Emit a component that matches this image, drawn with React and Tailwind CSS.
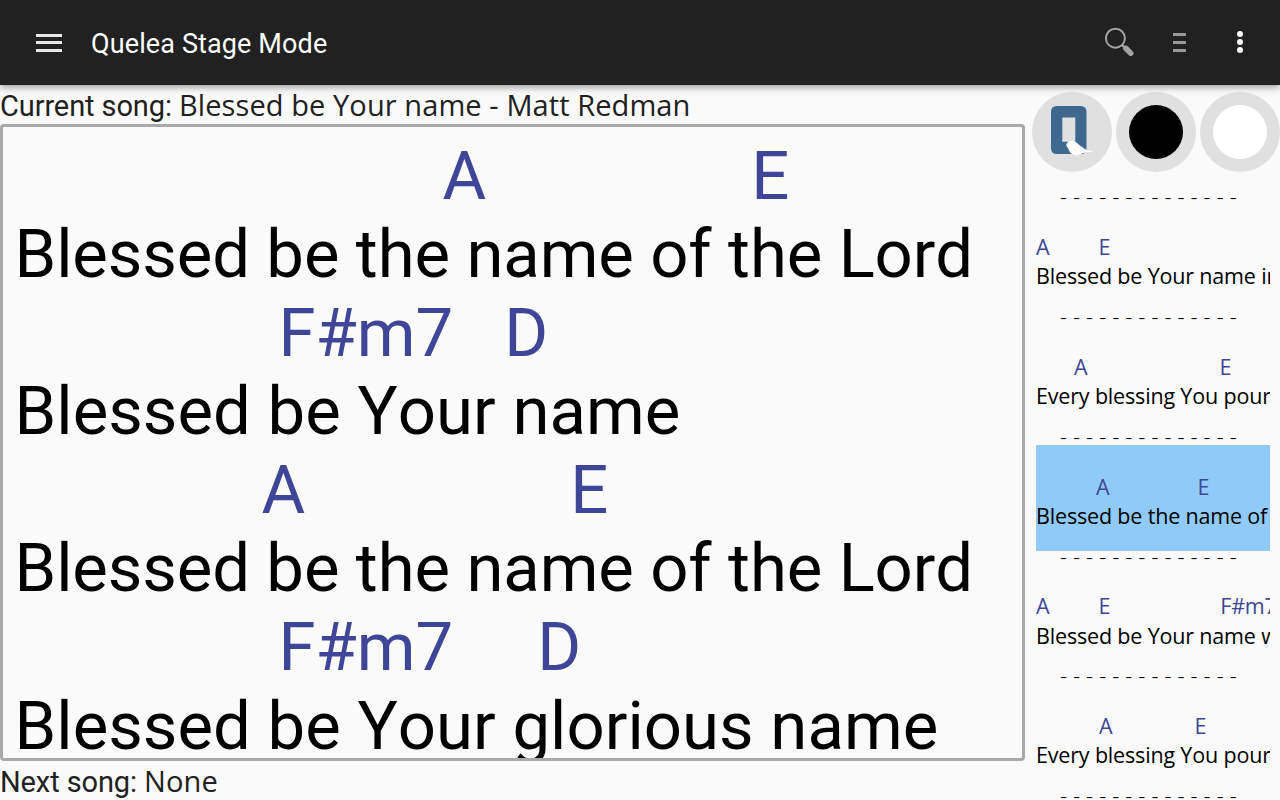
import React from 'react';

const lyrics = [
  {
    chords: [{ name: 'A', gap: 'ml-[428px]' }, { name: 'E', gap: 'ml-[265px]' }],
    text: 'Blessed be the name of the Lord',
    tracking: 'tracking-[-0.1px]',
  },
  {
    chords: [{ name: 'F#m7', gap: 'ml-[264px]' }, { name: 'D', gap: 'ml-[51px]' }],
    text: 'Blessed be Your name',
    tracking: 'tracking-[0.05px]',
  },
  {
    chords: [{ name: 'A', gap: 'ml-[247px]' }, { name: 'E', gap: 'ml-[265px]' }],
    text: 'Blessed be the name of the Lord',
    tracking: 'tracking-[-0.1px]',
  },
  {
    chords: [{ name: 'F#m7', gap: 'ml-[264px]' }, { name: 'D', gap: 'ml-[84px]' }],
    text: 'Blessed be Your glorious name',
    tracking: 'tracking-[0.05px]',
  },
];

const sections = [
  {
    chords: [{ name: 'A', gap: 'ml-0' }, { name: 'E', gap: 'ml-[49px]' }],
    text: 'Blessed be Your name in',
  },
  {
    chords: [{ name: 'A', gap: 'ml-[38px]' }, { name: 'E', gap: 'ml-[132px]' }],
    text: 'Every blessing You pour',
  },
  {
    chords: [{ name: 'A', gap: 'ml-[60px]' }, { name: 'E', gap: 'ml-[88px]' }],
    text: 'Blessed be the name of',
    active: true,
  },
  {
    chords: [
      { name: 'A', gap: 'ml-0' },
      { name: 'E', gap: 'ml-[49px]' },
      { name: 'F#m7', gap: 'ml-[110px]' },
    ],
    text: 'Blessed be Your name w',
  },
  {
    chords: [{ name: 'A', gap: 'ml-[63px]' }, { name: 'E', gap: 'ml-[82px]' }],
    text: 'Every blessing You pour',
  },
];

const Chords = ({ chords }) => (
  <div className="flex whitespace-pre text-[#3f4698]">
    {chords.map((chord, i) => (
      <span key={i} className={chord.gap}>{chord.name}</span>
    ))}
  </div>
);

const Divider = () => (
  <div className="relative h-[8px] leading-[8px] pl-[24px] text-[22px] font-light text-black tracking-[0.13px]">
    - - - - - - - - - - - - - -
  </div>
);

const SearchIcon = () => (
  <svg className="w-8 h-8" viewBox="0 0 32 32" fill="none">
    <circle cx="12.400" cy="11.200" r="9.500" stroke="#a3a3a3" strokeWidth="2" />
    <path d="M19 17.800l3 2.800" stroke="#a3a3a3" strokeWidth="2.500" />
    <path d="M22.800 21.300l4.900 4.900" stroke="#a3a3a3" strokeWidth="5.500" strokeLinecap="round" />
  </svg>
);

const LogoIcon = () => (
  <svg className="w-12 h-14" viewBox="0 0 48 56">
    <path
      fill="#3e688d"
      fillRule="evenodd"
      d="M9 2h23.500q6 0 6 6v36q0 6-6 6H9q-6 0-6-6V8q0-6 6-6zM14.300 13.500v24.300h13v-24.300z"
    />
    <path
      fill="#fff"
      d="M18.500 42c-.5-3 1.500-5 4.500-5 2-1 4.500.2 6 2 2.500 2.400 5.500 3.800 8.500 6.500 3 1.200 5.500 1.500 8 2-4 .8-8 .3-11 1.700-3 1.500-7.500 2.500-10 1-3.500-1.700-3.500-5-6-8.200z"
    />
    <path d="M29 51l1 2.500" stroke="#f4f4f4" strokeWidth="1" />
  </svg>
);

const RoundButton = ({ label, children }) => (
  <button
    aria-label={label}
    className="w-20 h-20 shrink-0 rounded-full bg-[#e0e0e0] flex items-center justify-center"
  >
    {children}
  </button>
);

const App = () => {
  return (
    <div className="w-[1280px] h-[800px] flex flex-col overflow-hidden bg-[#fafafa] font-['Roboto',sans-serif]">
      <header className="relative h-[85px] shrink-0 flex items-center bg-[#212121] text-white shadow-[0_1px_8px_rgba(0,0,0,0.5)]">
        <button aria-label="Menu" className="ml-9 w-[26px] h-[18px] flex flex-col justify-between">
          <span className="w-full h-[3px] bg-[#e8e8e8]" />
          <span className="w-full h-[3px] bg-[#e8e8e8]" />
          <span className="w-full h-[3px] bg-[#e8e8e8]" />
        </button>
        <h1 className="ml-[29px] mt-[3px] text-[27px] tracking-[0.12px]">Quelea Stage Mode</h1>
        <div className="ml-auto mr-[37px] flex items-center">
          <button aria-label="Search" className="mr-[38px]"><SearchIcon /></button>
          <button aria-label="List" className="mr-[51px] w-[13px] h-[19px] flex flex-col justify-between">
            <span className="w-full h-[3px] bg-[#999]" />
            <span className="w-full h-[3px] bg-[#999]" />
            <span className="w-full h-[3px] bg-[#999]" />
          </button>
          <button aria-label="More" className="-mt-[2px] w-[6px] h-[22px] flex flex-col justify-between">
            <span className="size-[6px] rounded-full bg-white" />
            <span className="size-[6px] rounded-full bg-white" />
            <span className="size-[6px] rounded-full bg-white" />
          </button>
        </div>
      </header>

      <div className="flex flex-1 min-h-0">
        <main className="w-[1025px] shrink-0 flex flex-col">
          <p className="h-[39px] shrink-0 leading-[40px] text-[29px] tracking-[-0.1px] text-[#212121] whitespace-pre">
            Current song: <span className="font-['Open_Sans',sans-serif] tracking-[0.09px]">Blessed be Your name - Matt Redman</span>
          </p>
          <div className="h-[637px] shrink-0 overflow-hidden rounded-[4px] border-[3px] border-[#a9a9a9] pl-[11.5px] pt-[9.5px] text-[67px] leading-[78.6px] [font-kerning:none] whitespace-pre text-black">
            {lyrics.map((line, i) => (
              <div key={i}>
                <Chords chords={line.chords} />
                <div className={line.tracking}>{line.text}</div>
              </div>
            ))}
          </div>
          <p className="leading-[40px] text-[29px] tracking-[-0.1px] text-[#212121] whitespace-pre">
            Next song: <span className="font-['Open_Sans',sans-serif] tracking-[0.09px]">None</span>
          </p>
        </main>

        <aside className="flex-1 min-w-0 flex flex-col">
          <div className="ml-[7px] mt-[7px] flex gap-1">
            <RoundButton label="Show logo"><LogoIcon /></RoundButton>
            <RoundButton label="Show black">
              <span className="size-[54px] rounded-full bg-black" />
            </RoundButton>
            <RoundButton label="Clear text">
              <span className="size-[54px] rounded-full bg-white" />
            </RoundButton>
          </div>
          <div className="ml-[11px] mr-[10px] mt-[20.4px] flex-1 min-h-0 overflow-hidden font-['Open_Sans',sans-serif] text-[21.5px] leading-[29.3px] tracking-[-0.17px] whitespace-pre text-black">
            <Divider />
            {sections.map((section, i) => (
              <div key={i}>
                <div className={section.active ? 'mt-[5.5px] mb-[0.5px] h-[106px] pt-[26.500px] bg-[#90caf9]' : 'h-[111.7px] pt-[31.6px]'}>
                  <Chords chords={section.chords} />
                  <div>{section.text}</div>
                </div>
                <Divider />
              </div>
            ))}
          </div>
        </aside>
      </div>
    </div>
  );
};

export default App;
